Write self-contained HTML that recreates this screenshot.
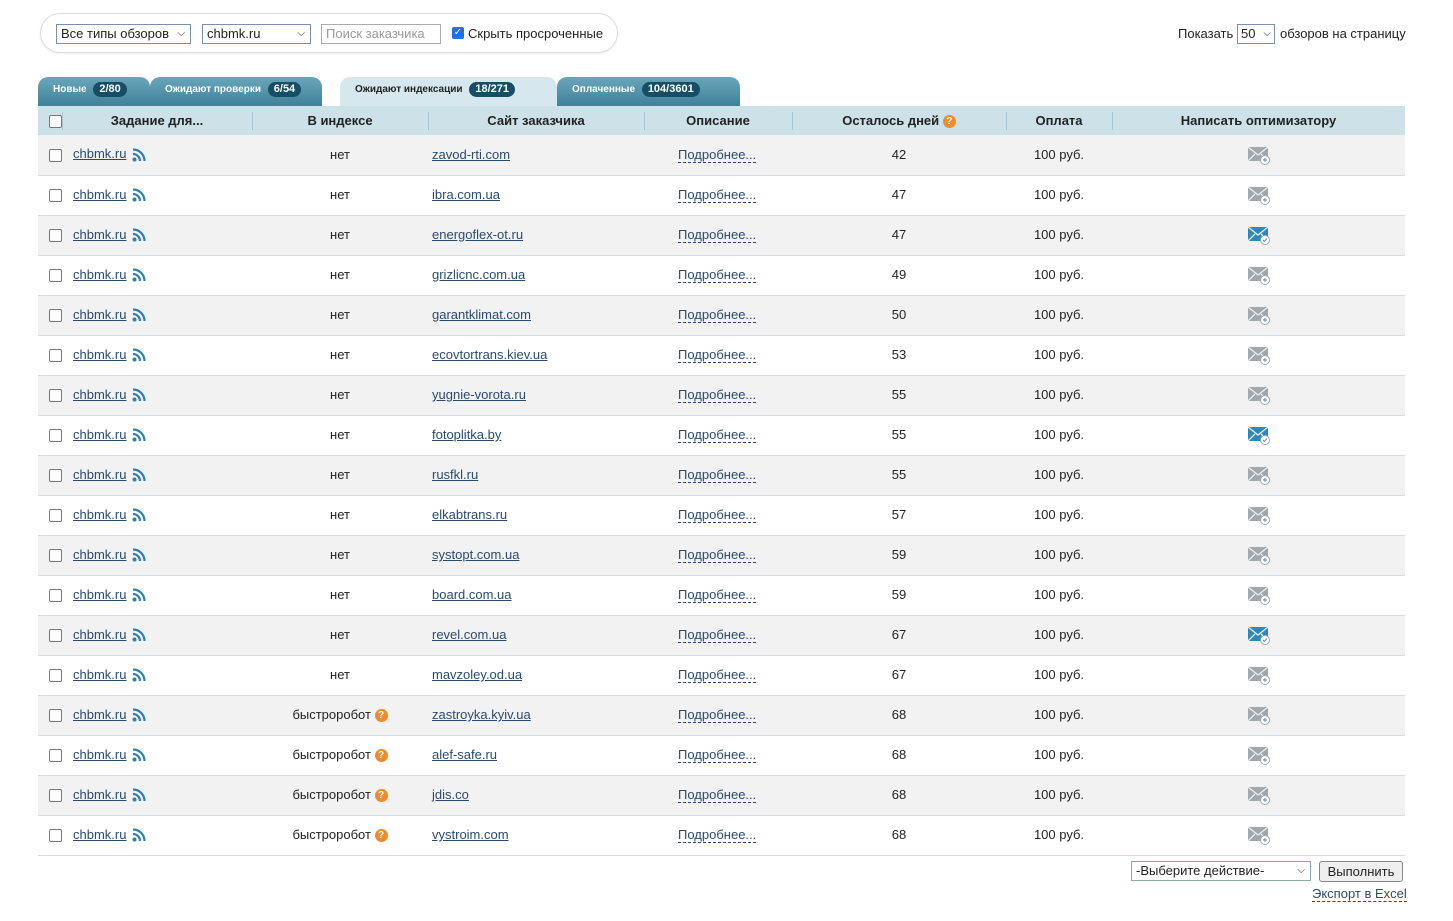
<!DOCTYPE html>
<html><head><meta charset="utf-8"><style>
body{margin:0;background:#fff;font-family:"Liberation Sans",sans-serif;font-size:13px;color:#222;width:1453px;height:921px;position:relative;overflow:hidden}
.abs{position:absolute}
.filter{left:40px;top:13px;width:576px;height:38px;border:1px solid #ddd;border-radius:20px;box-shadow:0 1px 2px #eee}
.sel{position:absolute;border:1px solid #7a8fa8;background:#fff;font-size:13px;line-height:18px;padding-left:4px;box-sizing:border-box;height:20px}
.sel i{position:absolute;right:5px;top:0;font-style:normal;font-size:10px}
.tab{position:absolute;top:77px;height:29px;background:linear-gradient(#6aa6ba,#3f8199);border-radius:10px 10px 0 0;color:#fff;font-weight:bold;font-size:10px;line-height:26px;padding-left:15px;box-sizing:border-box;white-space:nowrap}
.tab b{display:inline-block;background:#164e66;color:#fff;border-radius:8px;padding:0 6px;line-height:15px;margin-left:4px;font-size:11px}
.tab.act{background:#d6e8ee;color:#222}
table{position:absolute;left:38px;top:106px;width:1367px;border-collapse:collapse;table-layout:fixed}
th{background:#cde1e8;height:29px;font-size:13px;font-weight:bold;padding:0;position:relative}
th+th:before{content:"";position:absolute;left:0;top:6px;height:18px;border-left:1px solid #a9c6d2}
tr.r{height:40px}
td{height:39px;max-height:39px;line-height:14px;border-bottom:1px solid #d3dde2;padding:0;white-space:nowrap;overflow:hidden}
td svg{vertical-align:middle}
tr.o td{background:#f2f2f2}
a{color:#2a4a6c;text-decoration:underline}
.d{color:#2a4a6c;text-decoration:none;border-bottom:1px dashed #2a4a6c}
.cb{display:inline-block;width:11px;height:11px;border:1px solid #777;border-radius:2px;background:#fff;vertical-align:middle}
.q{display:inline-block;width:13px;height:13px;border-radius:50%;background:#f08a2c;color:#fff;font-size:10px;line-height:13px;text-align:center;font-weight:bold;vertical-align:middle}
</style></head><body>
<div class="abs filter"></div>
<div class="sel" style="left:56px;top:24px;width:135px">Все типы обзоров<i>&#x2335;</i></div>
<div class="sel" style="left:202px;top:24px;width:109px">chbmk.ru<i>&#x2335;</i></div>
<div class="sel" style="left:321px;top:24px;width:120px;color:#999;border-color:#aab">Поиск заказчика</div>
<div class="abs" style="left:452px;top:27px;width:12px;height:12px;background:#1a73e8;border-radius:2px;color:#fff;font-size:10px;line-height:12px;text-align:center">✓</div>
<div class="abs" style="left:468px;top:26px">Скрыть просроченные</div>
<div class="abs" style="left:1178px;top:26px">Показать</div>
<div class="sel" style="left:1237px;top:24px;width:38px;padding-left:3px">50<i style="right:3px">&#x2335;</i></div>
<div class="abs" style="left:1280px;top:26px">обзоров на страницу</div>

<div class="tab" style="left:38px;width:112px">Новые <b>2/80</b></div>
<div class="tab" style="left:150px;width:172px">Ожидают проверки <b>6/54</b></div>
<div class="tab act" style="left:340px;width:217px">Ожидают индексации <b>18/271</b></div>
<div class="tab" style="left:557px;width:183px">Оплаченные <b>104/3601</b></div>

<table id="t"><colgroup><col style="width:24px"><col style="width:190px"><col style="width:176px"><col style="width:216px"><col style="width:148px"><col style="width:214px"><col style="width:106px"><col style="width:293px"></colgroup>
<tr><th style="text-align:left;padding-left:11px"><span class="cb"></span></th><th>Задание для...</th><th>В индексе</th><th>Сайт заказчика</th><th>Описание</th><th>Осталось дней <span class="q">?</span></th><th>Оплата</th><th>Написать оптимизатору</th></tr>
</table>
<div class="sel" style="left:1131px;top:861px;width:180px;border-color:#8aa">-Выберите действие-<i>&#x2335;</i></div>
<div class="abs" style="left:1319px;top:861px;width:84px;height:21px;border:1px solid #888;border-radius:3px;background:#efefef;text-align:center;line-height:20px;box-sizing:border-box">Выполнить</div>
<div class="abs" style="left:1312px;top:886px"><span class="d">Экспорт в Excel</span></div>
<script>
var rows=[["zavod-rti.com",42,0,0],["ibra.com.ua",47,0,0],["energoflex-ot.ru",47,0,1],["grizlicnc.com.ua",49,0,0],["garantklimat.com",50,0,0],["ecovtortrans.kiev.ua",53,0,0],["yugnie-vorota.ru",55,0,0],["fotoplitka.by",55,0,1],["rusfkl.ru",55,0,0],["elkabtrans.ru",57,0,0],["systopt.com.ua",59,0,0],["board.com.ua",59,0,0],["revel.com.ua",67,0,1],["mavzoley.od.ua",67,0,0],["zastroyka.kyiv.ua",68,1,0],["alef-safe.ru",68,1,0],["jdis.co",68,1,0],["vystroim.com",68,1,0]];
var rss='<svg width="14" height="14" viewBox="0 0 14 14" style="margin-left:6px"><circle cx="2.5" cy="11.5" r="2" fill="#2d7fb0"/><path d="M1 6a7 7 0 0 1 7 7M1 1.5a11.5 11.5 0 0 1 11.5 11.5" stroke="#2d7fb0" stroke-width="2.2" fill="none"/></svg>';
function env(b){var c=b?"#2d89b7":"#a0a8ad";return '<svg width="24" height="20" viewBox="0 0 24 20"><rect x="1" y="2" width="20" height="14" fill="'+c+'"/><path d="M1 2l10 8 10-8M1 16l7-7M21 16l-7-7" stroke="#e8eef2" stroke-width="1.3" fill="none"/><circle cx="18" cy="15" r="4.5" fill="#fff" stroke="#9aa" /><path d="'+(b?"M16 15l1.5 1.5 2.5-3":"M18 13v4M16 15h4")+'" stroke="#789" stroke-width="1" fill="none"/></svg>';}
var h="";rows.forEach(function(r,i){h+='<tr class="r '+(i%2?"":"o")+'"><td style="padding-left:11px"><span class="cb"></span></td><td style="padding-left:11px"><a>chbmk.ru</a>'+rss+'</td><td style="text-align:center">'+(r[2]?'быстроробот <span class="q">?</span>':'нет')+'</td><td style="padding-left:4px"><a>'+r[0]+'</a></td><td style="padding-left:34px"><span class="d">Подробнее...</span></td><td style="text-align:center">'+r[1]+'</td><td style="text-align:center">100 руб.</td><td style="text-align:center">'+env(r[3])+'</td></tr>';});
document.getElementById("t").insertAdjacentHTML("beforeend",h);
</script>
</body></html>
